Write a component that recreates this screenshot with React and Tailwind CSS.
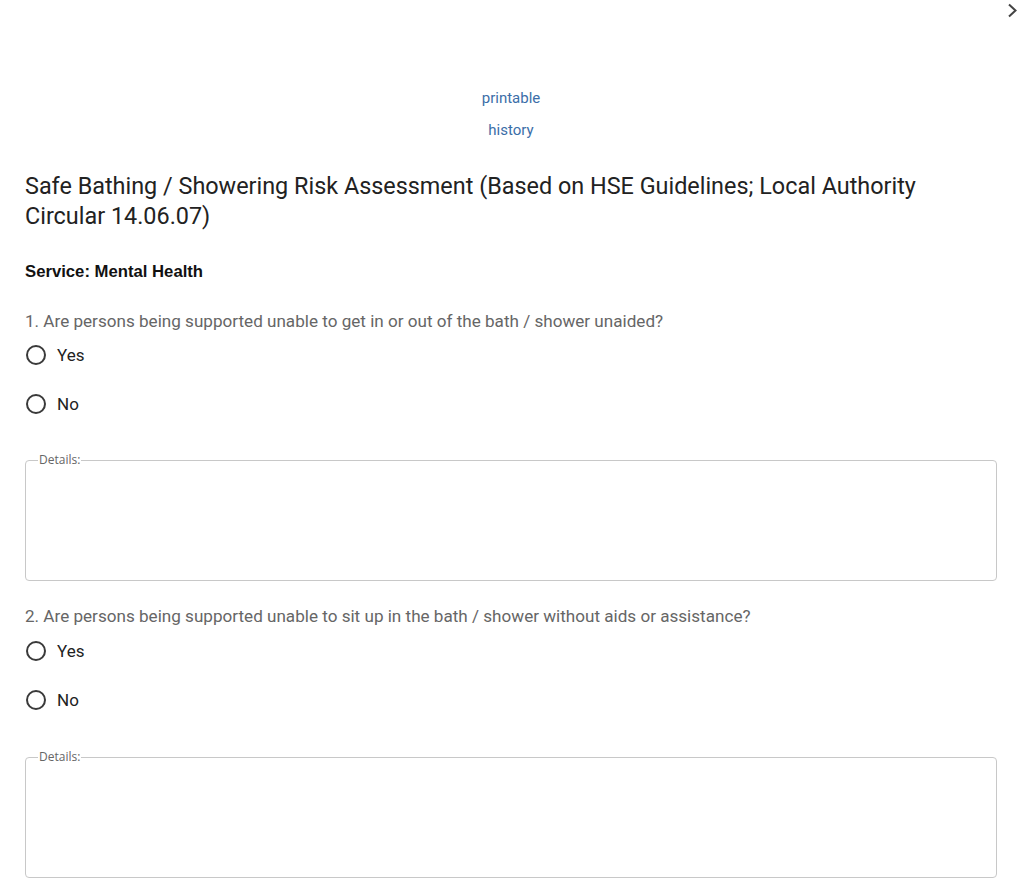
import React from "react";

function Radio({ label }) {
  return (
    <label className="flex items-center h-6 pl-[1px]">
      <span className="w-5 h-5 rounded-full border-2 border-[#3a3a3a] inline-block" />
      <span className="ml-[11px] text-[17px] text-[#222] leading-6">{label}</span>
    </label>
  );
}

function Details() {
  return (
    <fieldset className="border border-[#c8c8c8] rounded-[4px] px-3 h-[128px]">
      <legend className="px-[1px] text-[12px] leading-[14px] text-[#666]" style={{ fontFamily: '"Open Sans", sans-serif' }}>
        Details:
      </legend>
    </fieldset>
  );
}

function Question({ text, top, yesTop, detailsTop }) {
  return (
    <div>
      <div className={`text-[17.1px] leading-5 text-[#666] ${top}`}>{text}</div>
      <div className={yesTop}>
        <Radio label="Yes" />
      </div>
      <div className="mt-[25px]">
        <Radio label="No" />
      </div>
      <div className={detailsTop}>
        <Details />
      </div>
    </div>
  );
}

export default function App() {
  return (
    <div
      className="relative bg-white w-[1024px] h-[892px] overflow-hidden pl-[25px] pr-[27px]"
      style={{ fontFamily: "Roboto, 'Liberation Sans', sans-serif" }}
    >
      <svg className="absolute left-[1006px] top-[3px]" width="12" height="15" viewBox="0 0 12 15">
        <polyline points="3,1.5 9.5,7.5 3,13.5" fill="none" stroke="#444" strokeWidth="2" />
      </svg>
      <div className="pt-[88px] flex flex-col items-center text-[15px] leading-5 text-[#3b6ea8]">
        <a className="cursor-pointer">printable</a>
        <a className="cursor-pointer mt-[12px]">history</a>
      </div>
      <h1 className="mt-[31px] text-[23.4px] leading-[30px] text-[#222] font-normal">
        Safe Bathing / Showering Risk Assessment (Based on HSE Guidelines; Local Authority Circular 14.06.07)
      </h1>
      <div
        className="mt-[31px] text-[16.7px] leading-5 font-bold text-[#111]"
        style={{ fontFamily: "'Liberation Sans', Arial, sans-serif" }}
      >
        Service: Mental Health
      </div>
      <Question
        top="mt-[29px]"
        yesTop="mt-[12px]"
        detailsTop="mt-[37px]"
        text="1. Are persons being supported unable to get in or out of the bath / shower unaided?"
      />
      <Question
        top="mt-[25px]"
        yesTop="mt-[13px]"
        detailsTop="mt-[38px]"
        text="2. Are persons being supported unable to sit up in the bath / shower without aids or assistance?"
      />
    </div>
  );
}
